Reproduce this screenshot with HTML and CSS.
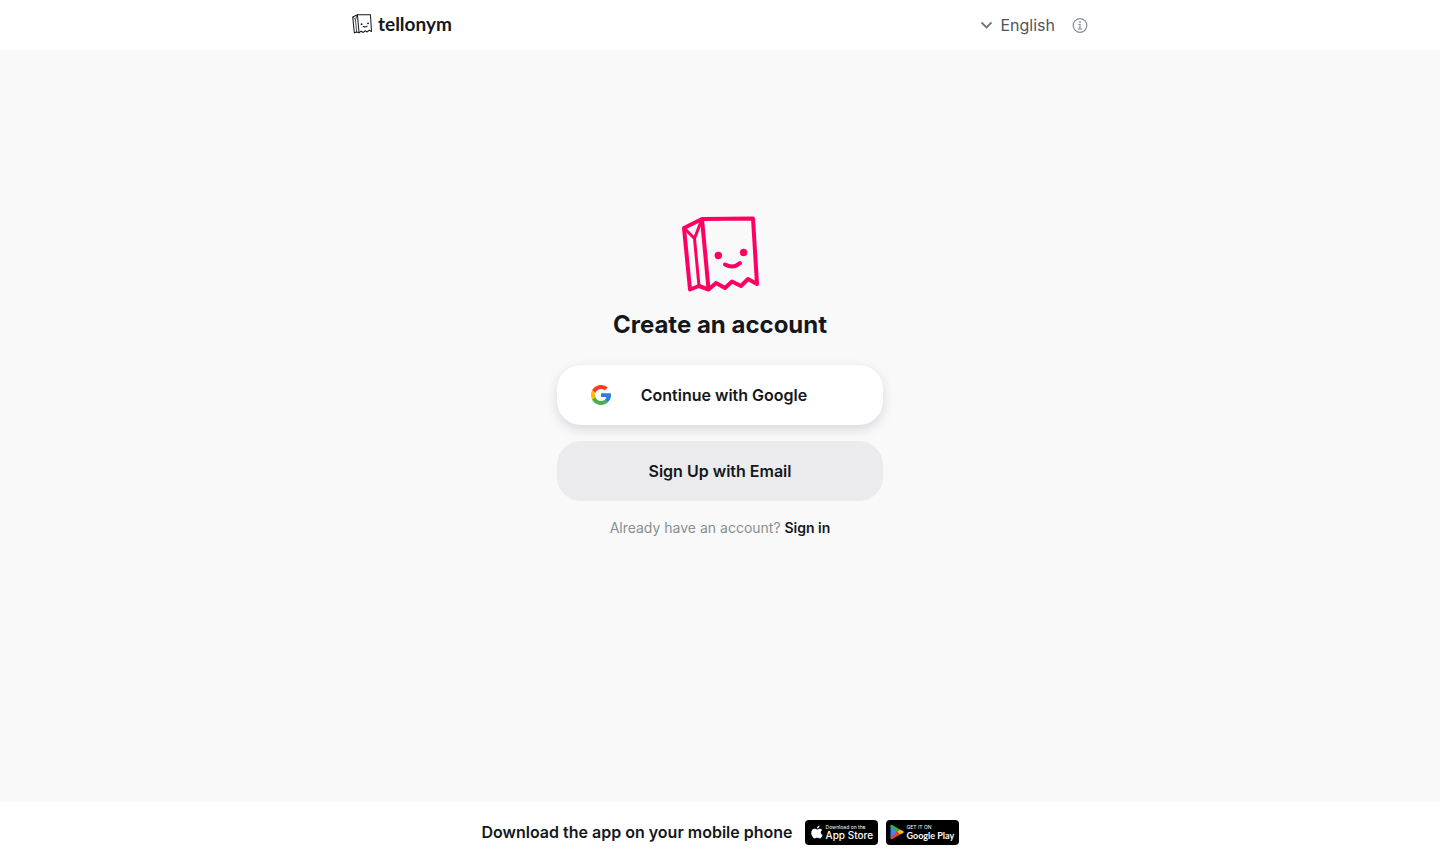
FILE: index.html
```html
<!DOCTYPE html>
<html lang="en">
<head>
    <meta charset="UTF-8">
    <meta name="viewport" content="width=device-width, initial-scale=1.0">
    <title>Tellonym</title>
    <link rel="stylesheet" href="styles.css">
</head>
<body>
    <svg class="sprite" aria-hidden="true">
        <symbol id="bag" viewBox="6 6 78 78">
            <g fill="none" stroke="currentColor" stroke-linejoin="round">
                <path class="bag-line" d="M27 9 78 8.5 82 74 73 69 66 76 57 71.5 50 78 41 73 33.5 79.500 24 76 15 79.500 9 18Z"/>
                <path class="bag-line" d="M27 9 33.5 79"/>
                <path class="bag-fold" d="M9 18 19.5 28.5 27 9M19.5 28.5 24 76"/>
                <path class="bag-smile" d="M50 54.5Q58.5 59 65 53"/>
            </g>
            <circle cx="43.3" cy="45.5" r="3.7" fill="currentColor"/>
            <circle cx="68.6" cy="42.5" r="3.7" fill="currentColor"/>
        </symbol>
    </svg>

    <header class="header">
        <div class="header-inner">
            <a class="brand" href="#">
                <svg class="brand-icon" aria-hidden="true"><use href="#bag"/></svg>
                <span>tellonym</span>
            </a>
            <div class="header-actions">
                <button class="language" type="button">
                    <svg width="12" height="8" viewBox="0 0 12 8" fill="none" stroke="#70777b" stroke-width="1.8" aria-hidden="true"><path d="M1.5 1.5l5 5 5-5"/></svg>
                    English
                </button>
                <a class="info" href="#" aria-label="Info">
                    <svg width="16" height="16" viewBox="0 0 16 16" fill="none" stroke="#879094" stroke-width="1.2" aria-hidden="true">
                        <circle cx="8" cy="8.5" r="6.8"/>
                        <path d="M6.300 7.5H8V12M6 12h4"/>
                        <circle cx="8" cy="5" r=".9" fill="#879094" stroke="none"/>
                    </svg>
                </a>
            </div>
        </div>
    </header>

    <main class="main">
        <svg class="logo" aria-hidden="true"><use href="#bag"/></svg>
        <h1>Create an account</h1>
        <div class="buttons">
            <button class="btn btn-google" type="button">
                <svg width="20" height="20" viewBox="0 0 48 48" aria-hidden="true">
                    <path fill="#ff3e1d" d="M24 9.5c3.5 0 6.7 1.2 9.2 3.6l6.9-6.9C35.9 2.4 30.5 0 24 0 14.6 0 6.5 5.4 2.6 13.2l8 6.2C12.5 13.7 17.7 9.5 24 9.5z"/>
                    <path fill="#2b7de1" d="M48 24.6c0-1.6-.2-3.1-.4-4.6H24v9h12.9c-.6 3-2.3 5.5-4.8 7.2l7.7 6C44.4 38 48 31.8 48 24.6z"/>
                    <path fill="#ffbc00" d="M10.5 28.6a14.5 14.5 0 0 1 0-9.2l-8-6.2a24 24 0 0 0 0 21.6z"/>
                    <path fill="#4cad50" d="M24 48c6.5 0 11.9-2.1 15.9-5.8l-7.7-6c-2.2 1.5-4.9 2.3-8.2 2.3-6.3 0-11.6-4.2-13.5-9.9l-8 6.2C6.5 42.6 14.6 48 24 48z"/>
                </svg>
                <span>Continue with Google</span>
            </button>
            <button class="btn btn-email" type="button">Sign Up with Email</button>
        </div>
        <p class="signin">Already have an account? <a href="#">Sign in</a></p>
    </main>

    <footer class="footer">
        <p>Download the app on your mobile phone</p>
        <div class="stores">
            <a class="store" href="#">
                <svg width="12" height="14" viewBox="0 0 24 28" fill="#fff" aria-hidden="true">
                    <path d="M17 1c.2 3-2.2 6-5.2 6C11.5 4 14.2 1.3 17 1zM22.5 9.8c-4.3 2.7-3.7 8.3.9 10.1-1 2.9-3.5 7-5.9 7-2 0-2.6-1.2-5-1.2s-3.2 1.2-5 1.2C4.3 26.9.5 20.7.5 15.5c0-5 3.2-8 6.5-8 2.2 0 3.9 1.4 5.3 1.4 1.3 0 3.3-1.6 5.9-1.5 1.7.1 3.3.9 4.3 2.4z"/>
                </svg>
                <span class="store-text"><small>Download on the</small><span class="store-name">App Store</span></span>
            </a>
            <a class="store store-google" href="#">
                <svg width="14" height="16" viewBox="0 0 28 32" aria-hidden="true">
                    <path fill="#4285f4" d="M1 3v26l13-13z"/>
                    <path fill="#34a853" d="M1 4q0-4 4-2l15 9-6 6L1 5z"/>
                    <path fill="#fbbc04" d="M20 11l6 3q3 2 0 4l-6 3-6-5z"/>
                    <path fill="#ea4335" d="M1 28q0 4 4 2l15-9-6-6L1 28z"/>
                </svg>
                <span class="store-text"><small>GET IT ON</small><span class="store-name">Google Play</span></span>
            </a>
        </div>
    </footer>
</body>
</html>
```
FILE: styles.css
```css
:root {
    --text: #14181c;
    --muted: #879094;
    --pink: #ff0062;
}

* {
    box-sizing: border-box;
}

body {
    display: flex;
    flex-direction: column;
    min-height: 100vh;
    margin: 0;
    background: #f9f9f9;
    color: var(--text);
    font-family: Inter, "Liberation Sans", sans-serif;
    font-size: 16px;
}

a {
    color: inherit;
    text-decoration: none;
}

button {
    border: 0;
    padding: 0;
    background: none;
    color: inherit;
    font: inherit;
    cursor: pointer;
}

svg {
    flex-shrink: 0;
}

h1,
p {
    margin: 0;
}

.sprite {
    position: absolute;
    width: 0;
    height: 0;
}

.bag-line {
    stroke-width: 4px;
}

.bag-fold {
    stroke-width: 3px;
}

.bag-smile {
    stroke-width: 4px;
    stroke-linecap: round;
}

.header {
    background: #fff;
}

.header-inner {
    display: flex;
    align-items: center;
    justify-content: space-between;
    max-width: 768px;
    height: 50px;
    margin: 0 auto;
    padding: 0 16px;
}

.brand {
    display: flex;
    align-items: center;
    gap: 6px;
    padding-bottom: 2px;
    font-family: Lato, sans-serif;
    font-size: 19px;
    font-weight: 700;
    line-height: 24px;
}

.brand-icon {
    width: 20px;
    height: 20px;
    stroke-width: 5px;
}

.header-actions,
.language {
    display: flex;
    align-items: center;
}

.header-actions {
    gap: 17px;
}

.language {
    gap: 8px;
    color: #4f5559;
}

.info {
    display: flex;
}

.main {
    flex: 1;
    display: flex;
    flex-direction: column;
    align-items: center;
    justify-content: center;
    padding: 24px 16px 121px;
}

.logo {
    width: 78px;
    height: 78px;
    color: var(--pink);
}

h1 {
    margin-top: 16px;
    font-size: 24px;
    font-weight: 700;
    line-height: 30px;
}

.buttons {
    display: grid;
    gap: 16px;
    width: 100%;
    max-width: 326px;
    margin-top: 25px;
}

.btn {
    height: 60px;
    border-radius: 24px;
    font-weight: 600;
}

.btn-google {
    display: grid;
    grid-template-columns: 20px 1fr;
    align-items: center;
    padding: 0 34px;
    background: #fff;
    box-shadow: 0 4px 12px rgba(30, 20, 60, 0.15);
}

.btn-google span {
    padding-right: 12px;
}

.btn-email {
    background: #ebebed;
}

.signin {
    margin-top: 16px;
    color: var(--muted);
    font-size: 14px;
    line-height: 22px;
}

.signin a {
    color: var(--text);
    font-weight: 600;
}

.footer {
    display: flex;
    flex-wrap: wrap;
    align-items: center;
    justify-content: center;
    gap: 12px;
    min-height: 60px;
    background: #fff;
    font-weight: 600;
}

.stores {
    display: flex;
    gap: 8px;
}

.store {
    display: flex;
    align-items: center;
    gap: 3px;
    width: 73px;
    height: 25px;
    padding: 0 6px;
    border-radius: 4px;
    background: #000;
    color: #fff;
}

.store-google {
    padding: 0 4px;
}

.store-text {
    display: flex;
    flex-direction: column;
    font-weight: 500;
    white-space: nowrap;
}

.store-text small {
    font-size: 5px;
    font-weight: 400;
    line-height: 6px;
}

.store-name {
    font-size: 10px;
    line-height: 11px;
}

.store-google .store-name {
    font-family: Lato, sans-serif;
    font-size: 9px;
    font-weight: 700;
}
```
